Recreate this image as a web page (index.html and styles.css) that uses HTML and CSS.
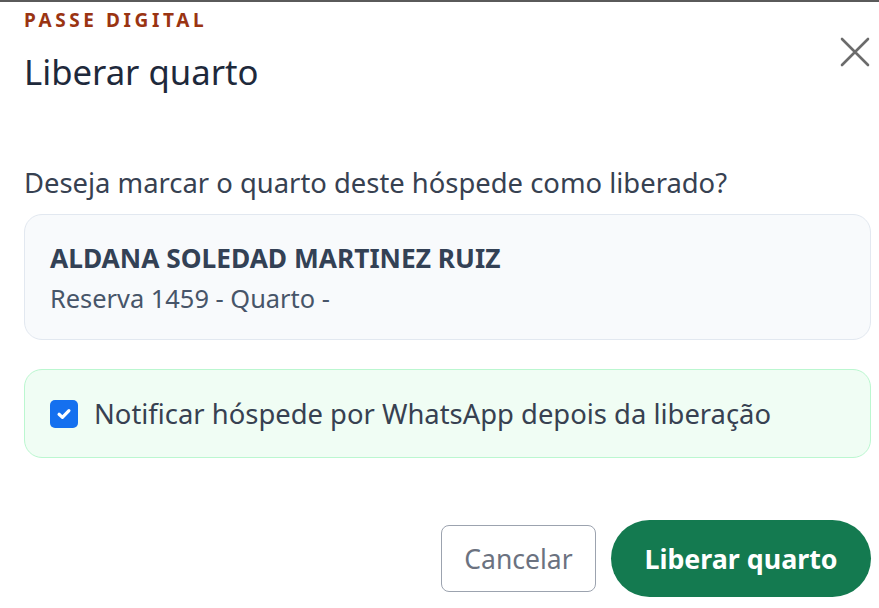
FILE: index.html
```html
<!DOCTYPE html>
<html lang="pt">
<head>
<meta charset="utf-8">
<link rel="stylesheet" href="styles.css">
</head>
<body>
<div class="modal">
  <header class="head">
    <div class="titles">
      <div class="brand">PASSE DIGITAL</div>
      <h1 class="title">Liberar quarto</h1>
    </div>
    <button class="close" aria-label="Fechar">
      <svg width="32" height="32" viewBox="0 0 32 32"><path d="M3 3 L29 29 M29 3 L3 29" stroke="#6b6b6b" stroke-width="2.6" stroke-linecap="round" fill="none"/></svg>
    </button>
  </header>
  <p class="question">Deseja marcar o quarto deste hóspede como liberado?</p>
  <div class="guest">
    <div class="guest-name">ALDANA SOLEDAD MARTINEZ RUIZ</div>
    <div class="guest-info">Reserva 1459 - Quarto -</div>
  </div>
  <label class="notify">
    <span class="check"><svg width="18" height="18" viewBox="0 0 16 16"><path d="M3.6 8.2 L6.6 11 L12.4 5" stroke="#fff" stroke-width="2.8" fill="none" stroke-linecap="round" stroke-linejoin="round"/></svg></span>
    <span class="notify-text">Notificar hóspede por WhatsApp depois da liberação</span>
  </label>
  <footer class="actions">
    <button class="btn cancel">Cancelar</button>
    <button class="btn primary">Liberar quarto</button>
  </footer>
</div>
</body>
</html>
```
FILE: styles.css
```css
html, body { margin: 0; padding: 0; background: #fff; }
body {
  font-family: "Noto Sans", "Open Sans", sans-serif;
  border-top: 2px solid #5a5a5a;
  width: 879px;
  height: 606px;
  overflow: hidden;
}
.modal { padding: 0 8px 0 24px; }
.head { display: flex; justify-content: space-between; align-items: flex-start; }
.brand {
  margin-top: 6px;
  font-size: 19px;
  font-weight: 700;
  letter-spacing: 3.6px;
  color: #9a3412;
  line-height: 24px;
}
.title {
  margin: 20px 0 0;
  font-size: 34.7px;
  font-weight: 400;
  color: #1e293b;
  line-height: 40px;
}
.close {
  margin: 34px 0 0;
  padding: 0;
  border: 0;
  background: none;
  width: 32px;
  height: 32px;
}
.question {
  margin: 73px 0 0;
  font-size: 27.4px;
  line-height: 36px;
  color: #374151;
}
.guest {
  box-sizing: border-box;
  margin-top: 13px;
  background: #f8fafc;
  border: 1px solid #e2e8f0;
  border-radius: 18px;
  padding: 27px 25px 0;
  height: 126px;
}
.guest-name { font-size: 26.3px; font-weight: 700; color: #334155; line-height: 32px; }
.guest-info { margin-top: 9px; font-size: 25.4px; color: #475569; line-height: 30px; }
.notify {
  box-sizing: border-box;
  margin-top: 29px;
  display: flex;
  align-items: center;
  gap: 16px;
  background: #f0fdf4;
  border: 1px solid #bbf7d0;
  border-radius: 18px;
  padding: 0 25px;
  height: 89px;
}
.check {
  width: 28px; height: 28px;
  border-radius: 5px;
  background: #1570ef;
  display: flex; align-items: center; justify-content: center;
}
.notify-text { font-size: 27.4px; color: #374151; }
.actions {
  margin-top: 62px;
  display: flex;
  justify-content: flex-end;
  align-items: center;
  gap: 15px;
}
.btn { font-family: inherit; cursor: pointer; padding: 0; }
.cancel {
  width: 155px; height: 67px;
  background: #fff;
  border: 1.5px solid #9ca3af;
  border-radius: 8px;
  font-size: 26.5px;
  color: #6b7280;
}
.primary {
  width: 260px; height: 77px;
  background: #147a50;
  border: 0;
  border-radius: 39px;
  color: #fff;
  font-size: 26.8px;
  font-weight: 700;
}
```
